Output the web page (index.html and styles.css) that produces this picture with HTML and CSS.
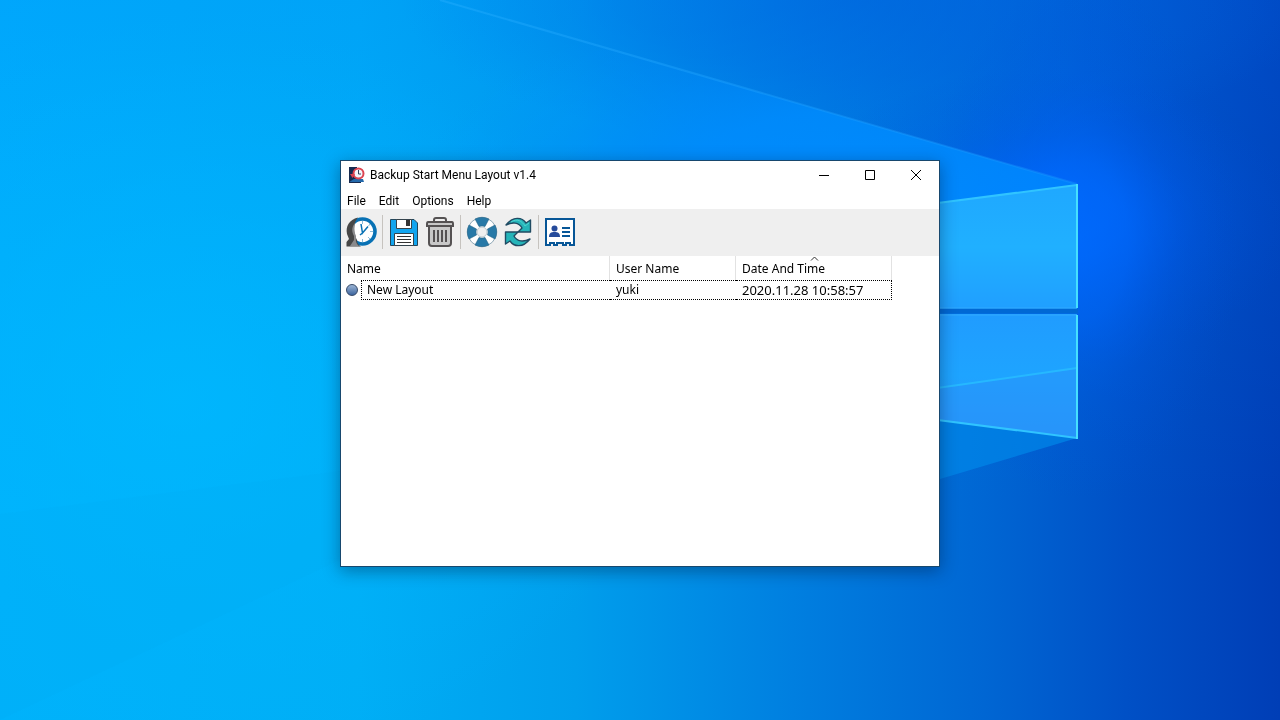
FILE: index.html
```html
<!DOCTYPE html>
<html lang="en">
<head>
<meta charset="utf-8">
<title>Backup Start Menu Layout v1.4</title>
<link rel="stylesheet" href="styles.css">
</head>
<body class="desktop">
<svg class="wallpaper" viewBox="0 0 1280 720" preserveAspectRatio="xMidYMid slice" aria-hidden="true">
  <defs>
    <linearGradient id="base" x1="0" y1="0" x2="1" y2="0">
      <stop offset="0" stop-color="#00b2fb"/>
      <stop offset=".28" stop-color="#00aef5"/>
      <stop offset=".45" stop-color="#009eec"/>
      <stop offset=".62" stop-color="#007fe0"/>
      <stop offset=".77" stop-color="#0066d3"/>
      <stop offset=".88" stop-color="#0050c6"/>
      <stop offset="1" stop-color="#003eb6"/>
    </linearGradient>
    <linearGradient id="top" x1="0" y1="0" x2="0" y2="1">
      <stop offset="0" stop-color="#0078ff" stop-opacity=".2"/>
      <stop offset=".5" stop-color="#0084ff" stop-opacity=".06"/>
      <stop offset=".7" stop-color="#0080ff" stop-opacity="0"/>
    </linearGradient>
    <radialGradient id="shade">
      <stop offset="0" stop-color="#0060dc" stop-opacity=".5"/>
      <stop offset=".5" stop-color="#0064e0" stop-opacity=".3"/>
      <stop offset="1" stop-color="#0070e8" stop-opacity="0"/>
    </radialGradient>
    <radialGradient id="beam">
      <stop offset="0" stop-color="#008cff" stop-opacity=".95"/>
      <stop offset=".4" stop-color="#008cff" stop-opacity=".8"/>
      <stop offset=".7" stop-color="#008cff" stop-opacity=".3"/>
      <stop offset="1" stop-color="#0090ff" stop-opacity="0"/>
    </radialGradient>
    <radialGradient id="glow">
      <stop offset="0" stop-color="#006aff"/>
      <stop offset=".3" stop-color="#0068ff" stop-opacity=".75"/>
      <stop offset=".6" stop-color="#005cf0" stop-opacity=".3"/>
      <stop offset="1" stop-color="#0050d8" stop-opacity="0"/>
    </radialGradient>
    <radialGradient id="left">
      <stop offset="0" stop-color="#00b9ff"/>
      <stop offset="1" stop-color="#00b4ff" stop-opacity="0"/>
    </radialGradient>
    <linearGradient id="pane-top" x1="0" y1="0" x2="0" y2="1">
      <stop offset="0" stop-color="#1fa8ff"/>
      <stop offset=".5" stop-color="#20b0ff"/>
      <stop offset="1" stop-color="#209fff"/>
    </linearGradient>
    <linearGradient id="pane-low" x1="0" y1="0" x2="0" y2="1">
      <stop offset="0" stop-color="#209cff"/>
      <stop offset=".5" stop-color="#1ea4ff"/>
      <stop offset="1" stop-color="#2894fa"/>
    </linearGradient>
    <linearGradient id="ray" x1="0" y1="0" x2="1" y2="0">
      <stop offset="0" stop-color="#28b0ff" stop-opacity=".4"/>
      <stop offset="1" stop-color="#1896ff" stop-opacity=".4"/>
    </linearGradient>
    <clipPath id="below-ray">
      <path d="M440 0L1077 184V720H0V0Z"/>
    </clipPath>
  </defs>
  <rect width="1280" height="720" fill="url(#base)"/>
  <rect width="1280" height="720" fill="url(#top)"/>
  <ellipse cx="180" cy="400" rx="480" ry="380" fill="url(#left)" opacity=".7"/>
  <ellipse cx="860" cy="0" rx="460" ry="150" fill="url(#shade)"/>
  <ellipse cx="1040" cy="220" rx="260" ry="150" fill="url(#glow)" opacity=".8"/>
  <ellipse cx="1080" cy="240" rx="160" ry="260" fill="url(#glow)" opacity=".7"/>
  <g clip-path="url(#below-ray)">
    <ellipse cx="860" cy="190" rx="440" ry="200" fill="url(#beam)"/>
  </g>
  <path d="M930 419L1077 438L930 482Z" fill="#0088e8" opacity=".7"/>
  <path d="M0 514L340 471V560L0 720Z" fill="#00a8f0" opacity=".1"/>
  <path d="M440 0L1077 184" stroke="url(#ray)" stroke-width="2"/>
  <path d="M930 204L1077 185V309H930Z" fill="url(#pane-top)"/>
  <path d="M930 314H1077V438L930 419Z" fill="url(#pane-low)"/>
  <path d="M930 389L1077 368V438L930 419Z" fill="#2894fa" opacity=".6"/>
  <path d="M930 389L1077 368" stroke="#26b8ff" stroke-width="2"/>
  <path d="M930 311H1078" stroke="#0068d4" stroke-width="5"/>
  <path d="M930 308H1077M930 315H1077" stroke="#30aaff" stroke-width="1"/>
  <path d="M930 204L1077 185M930 419L1077 438" fill="none" stroke="#30c4ff" stroke-width="2"/>
  <path d="M1077 184V308M1077 315V439" stroke="#46e0ff" stroke-width="2"/>
</svg>

<main class="window">
  <header class="titlebar">
    <svg class="app-icon" viewBox="0 0 16 16" aria-hidden="true">
      <path d="M0 0H8V11L12 14V16H0Z" fill="#172b50"/>
      <path d="M1 14.500L5 12H14L15 15H1Z" fill="#2469ab"/>
      <circle cx="9.500" cy="6.500" r="5" fill="#f5f5fa" stroke="#dc4350" stroke-width="2"/>
      <path d="M9.500 3V7H12" fill="none" stroke="#33445e"/>
      <path d="M1 7H6L3.500 11Z" fill="#dc4350"/>
    </svg>
    <h1 class="title">Backup Start Menu Layout v1.4</h1>
    <div class="captions">
      <button class="caption" aria-label="Minimize"><svg viewBox="0 0 12 12"><path d="M1 6.500H11"/></svg></button>
      <button class="caption" aria-label="Maximize"><svg viewBox="0 0 12 12"><path d="M1.500 1.500H10.500V10.500H1.500Z"/></svg></button>
      <button class="caption" aria-label="Close"><svg viewBox="0 0 12 12"><path d="M1 1L11 11M11 1L1 11"/></svg></button>
    </div>
  </header>

  <nav class="menubar">
    <button class="menu">File</button>
    <button class="menu">Edit</button>
    <button class="menu">Options</button>
    <button class="menu">Help</button>
  </nav>

  <div class="toolbar" role="toolbar" aria-label="Tools">
    <div class="group">
      <button class="tool" aria-label="Restore layout">
        <svg viewBox="0 0 32 32">
          <circle cx="17.500" cy="15.500" r="12.500" fill="#fff" stroke="#0871b4" stroke-width="3.600"/>
          <path d="M17.500 5V8M25 8L23.500 10M28 15.500H25M25 23L23 21M17.500 26V23" stroke="#8bbbd8" stroke-width="1"/>
          <path d="M16 8L17.500 17L23 10.500M17.500 17L15 19" fill="none" stroke="#0871b4" stroke-width="1.500"/>
          <path d="M13 1.500C4 4 .5 10 2 18L4 23L1.500 26V30.500H16C13 29 12 27 12 24C8 17 8 7 13 1.500Z" fill="#474747"/>
          <path d="M10 7C6 12 7 16 9 20V24L5 30H14C10 27 11 23 11 20C9 16 9 12 10 7Z" fill="#8a8a8c"/>
        </svg>
      </button>
    </div>
    <div class="group">
      <button class="tool" aria-label="Save layout">
        <svg viewBox="0 0 32 32">
          <path d="M2.500 3.500H26L29.500 7V29.500H2.500Z" fill="#12a5ef" stroke="#24475b"/>
          <path d="M8.500 3.500H23.500V12.500H8.500Z" fill="#fff" stroke="#34434c"/>
          <path d="M18 4H22V10H18Z" fill="#343434"/>
          <path d="M6.500 17.500H25.500V29.500H6.500Z" fill="#fff" stroke="#34434c"/>
          <path d="M9 20.500H23M9 23.500H23M9 26.500H23" stroke="#333"/>
        </svg>
      </button>
      <button class="tool" aria-label="Delete layout">
        <svg viewBox="0 0 32 32" fill="none" stroke="#555253" stroke-width="2">
          <path d="M5 10H27V27Q27 30 24 30H8Q5 30 5 27Z" fill="#c8c8c8"/>
          <path d="M4 6H28Q29 6 29 8V10H3V8Q3 6 4 6Z" fill="#c8c8c8"/>
          <path d="M10 6V4Q10 2 12 2H20Q22 2 22 4V6M10 14V26M14 14V26M18 14V26M22 14V26"/>
        </svg>
      </button>
    </div>
    <div class="group">
      <button class="tool" aria-label="Help">
        <svg viewBox="0 0 32 32">
          <circle cx="16" cy="16" r="10" fill="none" stroke="#fff" stroke-width="9"/>
          <circle cx="16" cy="16" r="14.500" fill="none" stroke="#8fa9b8"/>
          <path d="M9 3Q16 -.5 23 3L19 10.500Q16 9.500 13 10.500ZM29 9Q32.500 16 29 23L21.500 19Q22.500 16 21.500 13ZM23 29Q16 32.500 9 29L13 21.500Q16 22.500 19 21.500ZM3 23Q-.5 16 3 9L10.500 13Q9.500 16 10.500 19Z" fill="#2879a7" stroke="#286587" stroke-width=".6"/>
          <circle cx="16" cy="16" r="5" fill="#efefef" stroke="#b0c0c8" stroke-width=".8"/>
        </svg>
      </button>
      <button class="tool" aria-label="Refresh">
        <svg viewBox="0 0 32 32" fill="#25b4b9" stroke="#204b63" stroke-width="1.400" stroke-linejoin="round">
          <path d="M4 9C11 0 20 1 24 7L28.500 4V16H16L20 12C17 6 10 6 4 9Z"/>
          <path d="M28 23C21 32 12 31 8 25L3.500 28V16H16L12 20C15 26 22 26 28 23Z"/>
          <path d="M9 6C15 2 20 5 23 10L27 7" fill="none" stroke="#51d3d0" stroke-width="1"/>
        </svg>
      </button>
    </div>
    <div class="group">
      <button class="tool" aria-label="User profile">
        <svg viewBox="0 0 32 32">
          <path d="M2 3H30V29H26V27H22V29H19V27H13V29H10V27H6V29H2Z" fill="#fff" stroke="#075697" stroke-width="2"/>
          <circle cx="10.500" cy="12.500" r="3" fill="#264b9b"/>
          <path d="M5 21C5 17 7 16 10.500 16S16 17 16 21Z" fill="#264b9b"/>
          <path d="M18 12H26M18 16H26M18 20H26" stroke="#075697" stroke-width="2"/>
        </svg>
      </button>
    </div>
  </div>

  <section class="content">
    <table class="list">
      <colgroup><col class="col-name"><col class="col-user"><col class="col-date"></colgroup>
      <thead>
        <tr>
          <th scope="col">Name</th>
          <th scope="col">User Name</th>
          <th scope="col" aria-sort="ascending">Date And Time
            <svg class="sort" viewBox="0 0 9 5" aria-hidden="true"><path d="M1 4.500L4.500 1L8 4.500"/></svg>
          </th>
        </tr>
      </thead>
      <tbody>
        <tr>
          <td><div class="entry"><span class="dot"></span><span class="entry-name">New Layout</span></div></td>
          <td class="cell">yuki</td>
          <td class="cell last">2020.11.28 10:58:57</td>
        </tr>
      </tbody>
    </table>
  </section>
</main>
</body>
</html>
```
FILE: styles.css
```css
* {
  box-sizing: border-box;
}

.desktop {
  margin: 0;
  min-height: 100vh;
  padding: 7px 0 0;
  display: flex;
  align-items: center;
  justify-content: center;
  background: #0078d7;
  color: #000;
  font-family: "Noto Sans", sans-serif;
  font-size: 12px;
}

.wallpaper {
  position: fixed;
  inset: 0;
  width: 100%;
  height: 100%;
}

.window {
  position: relative;
  display: flex;
  flex-direction: column;
  width: 600px;
  max-width: 100%;
  min-height: 407px;
  background: #fff;
  border: 1px solid #17486e;
  box-shadow: 0 4px 16px rgba(0, 20, 50, .4);
}

button {
  margin: 0;
  padding: 0;
  border: 0;
  background: none;
  color: inherit;
  font: inherit;
}

.titlebar {
  display: flex;
  align-items: center;
  height: 28px;
  padding-left: 8px;
}

.app-icon {
  width: 16px;
  height: 16px;
  margin-right: 5px;
}

.title {
  flex: 1;
  margin: 0;
  font-family: Roboto, sans-serif;
  font-size: 12px;
  font-weight: 400;
  line-height: 16px;
}

.captions {
  display: flex;
}

.caption {
  display: grid;
  place-items: center;
  width: 46px;
  height: 28px;
}

.caption svg {
  width: 12px;
  height: 12px;
  fill: none;
  stroke: #000;
}

.menubar {
  display: flex;
  height: 20px;
  font-family: Roboto, sans-serif;
}

.menu {
  padding: 4px 7px 0 6px;
  line-height: 16px;
}

.toolbar {
  display: flex;
  align-items: center;
  height: 47px;
  padding-bottom: 1px;
  background: #efefef;
}

.group {
  display: flex;
  padding: 0 3px 0 2px;
}

.group + .group {
  padding: 0 2px 0 3px;
  border-left: 1px solid #c6c3bf;
}

.tool {
  display: grid;
  place-items: center;
  width: 36px;
  height: 34px;
}

.tool svg {
  width: 32px;
  height: 32px;
}

.content {
  flex: 1;
}

.list {
  width: 551px;
  max-width: 100%;
  table-layout: fixed;
  border-collapse: separate;
  border-spacing: 0;
}

.col-name {
  width: 269px;
}

.col-user {
  width: 126px;
}

.list th {
  position: relative;
  height: 24px;
  padding: 0 6px;
  border-right: 1px solid #e2e2e2;
  font-weight: 400;
  text-align: left;
}

.sort {
  position: absolute;
  top: 0;
  left: calc(50% - 4px);
  width: 9px;
  height: 5px;
  fill: none;
  stroke: #333;
}

.list td {
  height: 20px;
  padding: 0;
  line-height: 18px;
}

.entry {
  display: flex;
  align-items: center;
  gap: 3px;
  padding-left: 5px;
}

.dot {
  width: 12px;
  height: 12px;
  border: 1px solid #344969;
  border-radius: 50%;
  background: linear-gradient(#9cb5d5, #3c659f);
}

.entry-name {
  flex: 1;
  padding-left: 5px;
  border: 1px dotted #000;
  border-right: 0;
}

.list .cell {
  padding-left: 6px;
  border-top: 1px dotted #000;
  border-bottom: 1px dotted #000;
}

.list .last {
  border-right: 1px dotted #000;
  font-size: 13px;
}
```
